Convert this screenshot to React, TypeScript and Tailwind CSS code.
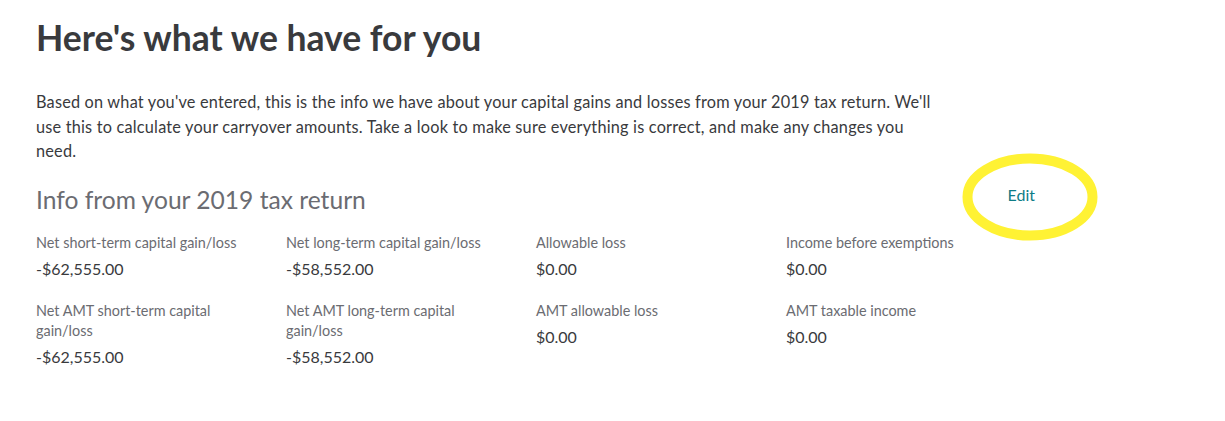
import React from "react";

const items = [
  { label: "Net short-term capital gain/loss", value: "-$62,555.00" },
  { label: "Net long-term capital gain/loss", value: "-$58,552.00" },
  { label: "Allowable loss", value: "$0.00" },
  { label: "Income before exemptions", value: "$0.00" },
  { label: "Net AMT short-term capital gain/loss", value: "-$62,555.00" },
  { label: "Net AMT long-term capital gain/loss", value: "-$58,552.00" },
  { label: "AMT allowable loss", value: "$0.00" },
  { label: "AMT taxable income", value: "$0.00" },
];

export default function App() {
  return (
    <div
      className="w-[1225px] h-[421px] bg-white overflow-hidden"
      style={{ fontFamily: "Lato, 'Noto Sans', sans-serif" }}
    >
      <div className="w-[1000px] ml-[36px] pt-[16px]">
        <h1 className="text-[35.5px] leading-[44px] font-bold text-[#393a3d]">
          Here's what we have for you
        </h1>
        <p className="mt-[30px] w-[930px] text-[16.3px] leading-[24.5px] tracking-[0.2px] text-[#393a3d]">
          Based on what you've entered, this is the info we have about your capital gains and losses from
          your 2019 tax return. We'll
          <br />
          use this to calculate your carryover amounts. Take a look to make sure everything is correct, and
          make any changes you
          <br />
          need.
        </p>
        <div className="relative mt-[20px] flex items-center justify-between h-[32px]">
          <h2 className="text-[24.6px] leading-[32px] text-[#6b6c72]">Info from your 2019 tax return</h2>
          <span className="text-[16px] leading-[24px] text-[#0e7c86] mr-[1px] mt-[-10px]">Edit</span>
          <svg
            className="absolute left-[926px] top-[-30.5px]"
            width="136"
            height="88"
            viewBox="0 0 136 88"
          >
            <ellipse cx="68" cy="44" rx="62.5" ry="38.5" fill="none" stroke="#fff234" strokeWidth="10" />
          </svg>
        </div>
        <div className="mt-[17px] grid grid-cols-4 gap-y-[22px]">
          {items.map((it) => (
            <div key={it.label} className="pr-[40px]">
              <div className="text-[14.4px] leading-[20px] text-[#6b6c72]">{it.label}</div>
              <div className="mt-[6px] text-[16px] leading-[20px] text-[#393a3d]">{it.value}</div>
            </div>
          ))}
        </div>
      </div>
    </div>
  );
}
